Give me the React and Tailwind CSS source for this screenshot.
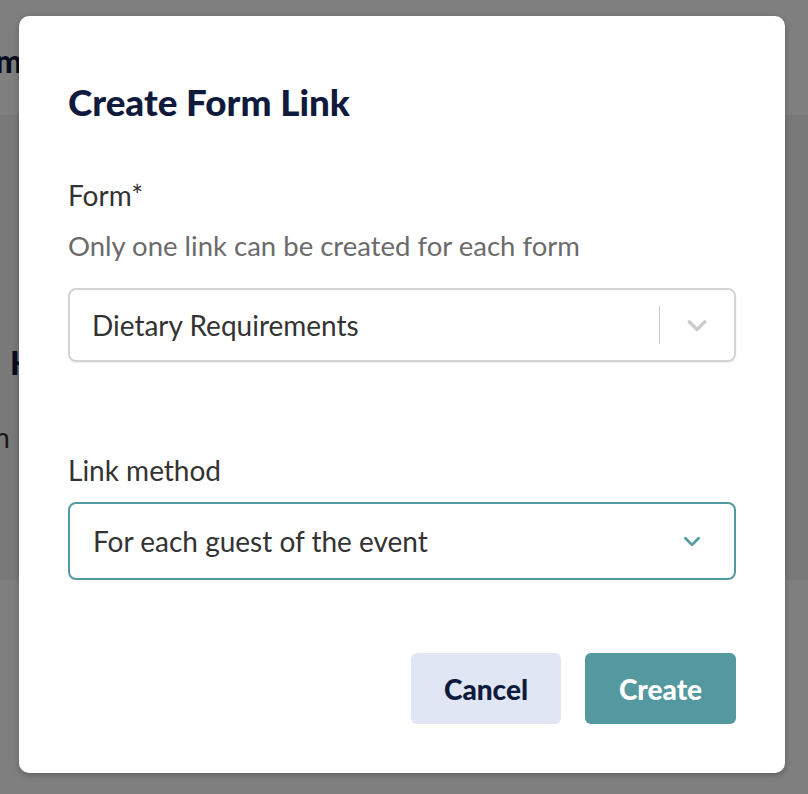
import React from 'react';

const Chevron = ({ className, strokeWidth = 3 }) => (
  <svg viewBox="0 0 20 20" className={className} fill="none" stroke="currentColor" strokeWidth={strokeWidth} strokeLinecap="round" strokeLinejoin="round">
    <path d="M4 7.5l6 6 6-6" />
  </svg>
);

export default function App() {
  return (
    <div className="relative h-[794px] w-[808px] overflow-hidden bg-white font-['Lato','Noto_Sans',sans-serif]">
      {/* page behind the dialog */}
      <div className="pt-[41px]">
        <h2 className="ml-[-52px] text-[32px] font-black leading-[40px] text-[#0f1a3d]">Form</h2>
      </div>
      <div className="mt-[34px] h-[465px] bg-[#f3f3f4] pt-[228px]">
        <h3 className="ml-[10px] text-[32px] font-black leading-[40px] text-[#0f1a3d]">Header</h3>
        <p className="ml-[-43px] mt-[37px] text-[28px] leading-[34px] text-[#333]">Plan</p>
      </div>

      {/* overlay + dialog */}
      <div className="absolute inset-0 bg-black/50">
        <div className="ml-[19px] mt-[16px] w-[766px] rounded-[10px] bg-white px-[49px] pt-[64px] pb-[49px] shadow-[0_2px_6px_rgba(0,0,0,0.25)]">
          <h1 className="text-[36.8px] font-black leading-[44px] text-[#0f1a3d]">Create Form Link</h1>

          <div className="mt-[54px] text-[28px] leading-[34px] text-[#333]">Form*</div>
          <div className="mt-[17px] text-[27.5px] leading-[34px] text-[#6b6b6b]">Only one link can be created for each form</div>

          <div className="mt-[25px] flex h-[74px] items-center rounded-[8px] border-2 border-[#d4d4d4] pl-[22px] shadow-[0_1px_2px_rgba(0,0,0,0.08)]">
            <span className="flex-1 text-[28px] text-[#333]">Dietary Requirements</span>
            <span className="h-[38px] w-px bg-[#cccccc]" />
            <span className="flex w-[74px] items-center justify-center text-[#cccccc]">
              <Chevron className="h-[26px] w-[26px]" strokeWidth={2.6} />
            </span>
          </div>

          <div className="mt-[91px] text-[28px] leading-[34px] text-[#333]">Link method</div>

          <div className="mt-[15px] flex h-[78px] items-center rounded-[8px] border-2 border-[#539aa0] pl-[23px]">
            <span className="flex-1 text-[28px] text-[#333]">For each guest of the event</span>
            <span className="flex w-[84px] items-center justify-center text-[#539aa0]">
              <Chevron className="h-[22px] w-[22px]" strokeWidth={2.4} />
            </span>
          </div>

          <div className="mt-[73px] flex justify-end gap-[24px]">
            <button className="h-[71px] w-[150px] rounded-[6px] bg-[#e0e6f4] text-[28px] font-black text-[#0f1a3d]">Cancel</button>
            <button className="h-[71px] w-[151px] rounded-[6px] bg-[#54999f] text-[28px] font-black text-white">Create</button>
          </div>
        </div>
      </div>
    </div>
  );
}
